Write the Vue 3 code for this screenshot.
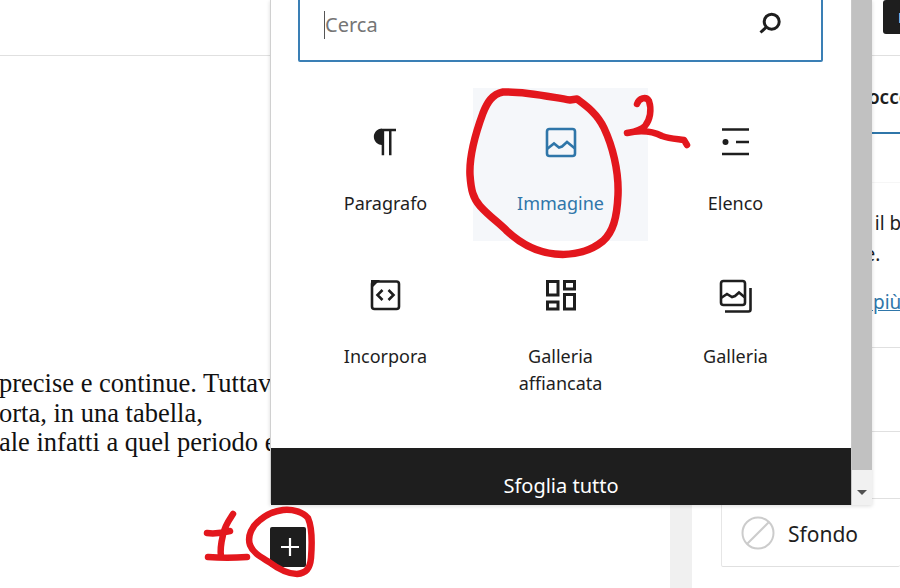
<template>
  <div class="page">
    <!-- editor -->
    <div class="editor">
      <div class="topbar"></div>
      <div class="text">
        <p>precise e continue. Tuttavia i dati sono</p>
        <p>orta, in una tabella,</p>
        <p>ale infatti a quel periodo e non oltre</p>
      </div>
      <button class="add-btn">
        <svg width="24" height="24" viewBox="0 0 24 24"><path d="M12 3v18M3 12h18" stroke="#fff" stroke-width="2.2" fill="none" /></svg>
      </button>
    </div>
    <div class="strip"></div>

    <!-- sidebar -->
    <div class="sidebar">
      <div class="side-top"><button class="publish">Pubblica</button></div>
      <div class="tabs"><span>Blocco</span></div>
      <div class="rule"></div>
      <div class="desc">
        <p>Inserisci il blocco</p>
        <p class="l2">l'immagine.</p>
        <a>Scopri di più</a>
      </div>
      <div class="panel">
        <div class="row row-a"></div>
        <div class="row row-b"></div>
        <div class="row row-c">
          <svg width="34" height="34" viewBox="0 0 34 34"><circle cx="17" cy="17" r="15.5" fill="none" stroke="#ccc" stroke-width="2" /><path d="M6 28 28 6" stroke="#ccc" stroke-width="2" /></svg>
          <span>Sfondo</span>
        </div>
      </div>
    </div>

    <!-- popover inserter -->
    <div class="popover">
      <div class="pop-body">
        <div class="search">
          <span class="placeholder">Cerca</span>
          <svg width="28" height="28" viewBox="0 0 28 28"><circle cx="15.7" cy="11.700" r="7.5" fill="none" stroke="#1e1e1e" stroke-width="3" /><path d="M10 17.500 4.500 22.500" stroke="#1e1e1e" stroke-width="3" /></svg>
        </div>
        <div class="grid">
          <div v-for="b in blocks" :key="b.label" class="cell" :class="{ active: b.active }">
            <svg width="40" height="40" viewBox="0 0 40 40" class="ico" v-html="b.icon"></svg>
            <span class="label">{{ b.label }}</span>
          </div>
        </div>
        <div class="footer">Sfoglia tutto</div>
      </div>
      <div class="scroll">
        <div class="thumb"></div>
        <div class="arrow"></div>
      </div>
    </div>

    <!-- hand drawn marks -->
    <svg class="marks" width="900" height="588" viewBox="0 0 900 588">
      <g fill="none" stroke="#e3171d" stroke-linecap="round" stroke-linejoin="round">
        <path stroke-width="7.5" d="M570 100C550 97 525 91 503 92C492 94 487 103 483 113C476 132 469 155 470 175C471 190 473 198 480 206C490 217 498 222 507 231C520 243 535 252 555 254C575 256 592 250 603 241C613 232 617 218 618 195C619 170 612 145 604 128C597 113 585 105 577 99L570 100" />
        <path stroke-width="6.5" d="M637 104C639 98 646 96 649 101C652 110 650 120 645 126C640 131 632 132 627 133C640 130 652 131 662 136C670 139 678 139 684 140L687 145" />
        <path stroke-width="6.5" d="M233 514C229 520 224 527 223 535C221 543 220 550 221 557M207 533C214 534 222 533 230 531M208 557C220 558 234 558 247 557" />
        <path stroke-width="6.5" d="M283 510C293 509 303 512 308 518C312 527 312 545 311 558C310 569 306 573 297 574C287 574 277 568 269 562C261 557 253 553 250 545C247 536 252 526 260 520C267 514 275 511 283 510" />
      </g>
    </svg>
  </div>
</template>

<script setup>
const line = 'fill="none" stroke="currentColor" stroke-width="2.6"'
const blocks = [
  {
    label: 'Paragrafo',
    icon: '<path transform="translate(-0.5 0) scale(1.667)" fill="currentColor" d="M18.3 4H9.9v-.1l-.9.2c-2.3.4-4 2.4-4 4.8s1.7 4.4 4 4.8l.7.1V20h1.5V5.500h2.900V20h1.500V5.500h2.700V4z"/>',
  },
  {
    label: 'Immagine',
    active: true,
    icon: `<rect x="6" y="7" width="28" height="27" rx="2.5" ${line}/><path d="M6 27l7-5.500 5 4 3-1 5-4.500 8 6.500" ${line}/>`,
  },
  {
    label: 'Elenco',
    icon: `<path d="M6 7.500h27M20 20h13M6 32h27" ${line}/><circle cx="9.500" cy="20" r="3" fill="currentColor"/>`,
  },
  {
    label: 'Incorpora',
    icon: `<rect x="6" y="6.500" width="27" height="27.500" rx="2.500" ${line}/><path d="M5 5h9l-9 9z" fill="currentColor"/><path d="M16.500 15l-5 5 5 5M22.500 15l5 5-5 5" ${line}/>`,
  },
  {
    label: 'Galleria affiancata',
    icon: `<g fill="none" stroke="currentColor" stroke-width="3"><rect x="6.500" y="6.500" width="10.500" height="13.500"/><rect x="23.500" y="6.500" width="10" height="7.500"/><rect x="6.500" y="27" width="10.500" height="7"/><rect x="23.500" y="19.500" width="10" height="14.500"/></g>`,
  },
  {
    label: 'Galleria',
    icon: `<g transform="translate(-1 0)"><rect x="6" y="6" width="24" height="24" rx="2.500" ${line}/><path d="M6 23l6-4 5 3 3-1 4-3.500 6 5" ${line}/><path d="M35.500 13v21.500a2 2 0 0 1-2 2H10" ${line}/></g>`,
  },
]
</script>

<style>
html, body { margin: 0; background: #fff; }
</style>

<style scoped>
.page {
  position: relative;
  width: 900px;
  height: 588px;
  overflow: hidden;
  display: flex;
  background: #fff;
  font-family: "Noto Sans", "Open Sans", sans-serif;
  color: #1e1e1e;
}
.editor { width: 670px; flex: none; overflow: hidden; }
.topbar { height: 55px; border-bottom: 1px solid #e0e0e0; }
.text {
  margin-top: 313px;
  font: 26.5px/29.5px "Liberation Serif", serif;
  color: #111;
  white-space: nowrap;
}
.text p { margin: 0 0 0 -1px; }
.add-btn {
  display: flex;
  align-items: center;
  justify-content: center;
  width: 36px;
  height: 40px;
  margin: 69px 0 0 270px;
  padding: 1px 0 0 3px;
  border: none;
  border-radius: 2px;
  background: #1e1e1e;
}
.strip { width: 22px; flex: none; background: #f0f0f0; }
.sidebar { flex: 1; min-width: 0; overflow: hidden; }
.side-top {
  height: 55px;
  border-bottom: 1px solid #e0e0e0;
  display: flex;
  justify-content: flex-end;
}
.publish {
  width: 208px;
  margin-right: -191px;
  height: 34px;
  padding: 0 0 0 15px;
  border: none;
  border-radius: 3px;
  background: #1e1e1e;
  color: #fff;
  font: 15px "Noto Sans", sans-serif;
  text-align: left;
  flex: none;
}
.tabs {
  height: 78px;
  box-sizing: border-box;
  padding: 28px 0 0 158px;
  border-bottom: 2px solid #2f76a9;
  font-size: 19px;
  font-weight: 600;
  white-space: nowrap;
}
.rule { height: 48px; border-bottom: 1px solid #f6f6f6; }
.desc {
  height: 164px;
  padding: 25px 0 0 104px;
  box-sizing: border-box;
  font-size: 19px;
  line-height: 31px;
  white-space: nowrap;
}
.desc p { margin: 0; }
.desc .l2 { margin-left: -20px; }
.desc a { display: block; margin: 17px 0 0 -5px; color: #2f76a9; text-decoration: underline; }
.panel {
  margin-left: 29px;
  border-left: 1px solid #e6e6e6;
  border-bottom: 1px solid #e0e0e0;
  border-radius: 2px;
}
.row { border-top: 1px solid #e0e0e0; }
.row-a { height: 83px; }
.row-b { height: 66px; }
.row-c {
  height: 67px;
  display: flex;
  align-items: center;
  gap: 13px;
  padding-left: 19px;
  font-size: 21px;
}
.row-c span { padding-top: 2px; }
.popover {
  position: absolute;
  left: 270px;
  top: 0;
  width: 602px;
  height: 505px;
  display: flex;
  background: #fff;
  box-shadow: 0 1px 4px rgba(0, 0, 0, 0.15);
}
.pop-body {
  flex: 1;
  display: flex;
  flex-direction: column;
  min-width: 0;
  border-left: 1px solid #d0d0d0;
  border-right: 1px solid #c8c8c8;
  border-radius: 0 0 0 3px;
}
.search {
  height: 64px;
  box-sizing: border-box;
  margin: -2px 28px 0 27px;
  padding: 0 37px 10px 24px;
  border: 2px solid #3a7fb5;
  border-radius: 2px;
  display: flex;
  align-items: center;
  justify-content: space-between;
}
.search svg { margin-top: -2px; }
.placeholder {
  font-size: 20px;
  line-height: 28px;
  color: #757575;
  border-left: 1.5px solid #555;
}
.grid {
  width: 525px;
  margin: 26px 0 0 27px;
  display: grid;
  grid-template-columns: repeat(3, 175px);
  grid-template-rows: 153px 153px;
}
.cell {
  box-sizing: border-box;
  padding-top: 34px;
  display: flex;
  flex-direction: column;
  align-items: center;
  text-align: center;
}
.cell.active { background: #f5f7fa; color: #2f76a9; }
.ico { flex: none; }
.label {
  margin-top: 28px;
  width: 110px;
  font-size: 18px;
  line-height: 27px;
}
.footer {
  margin-top: auto;
  height: 57px;
  box-sizing: border-box;
  padding-top: 24px;
  background: #1e1e1e;
  color: #fff;
  font-size: 20px;
  line-height: 27px;
  text-align: center;
}
.scroll {
  width: 20px;
  flex: none;
  background: #f1f1f1;
  display: flex;
  flex-direction: column;
  align-items: center;
}
.thumb { width: 100%; height: 470px; background: #c1c1c1; }
.arrow {
  margin-top: 20px;
  border-left: 5px solid transparent;
  border-right: 5px solid transparent;
  border-top: 5px solid #505050;
}
.marks { position: absolute; left: 0; top: 0; pointer-events: none; }
</style>
